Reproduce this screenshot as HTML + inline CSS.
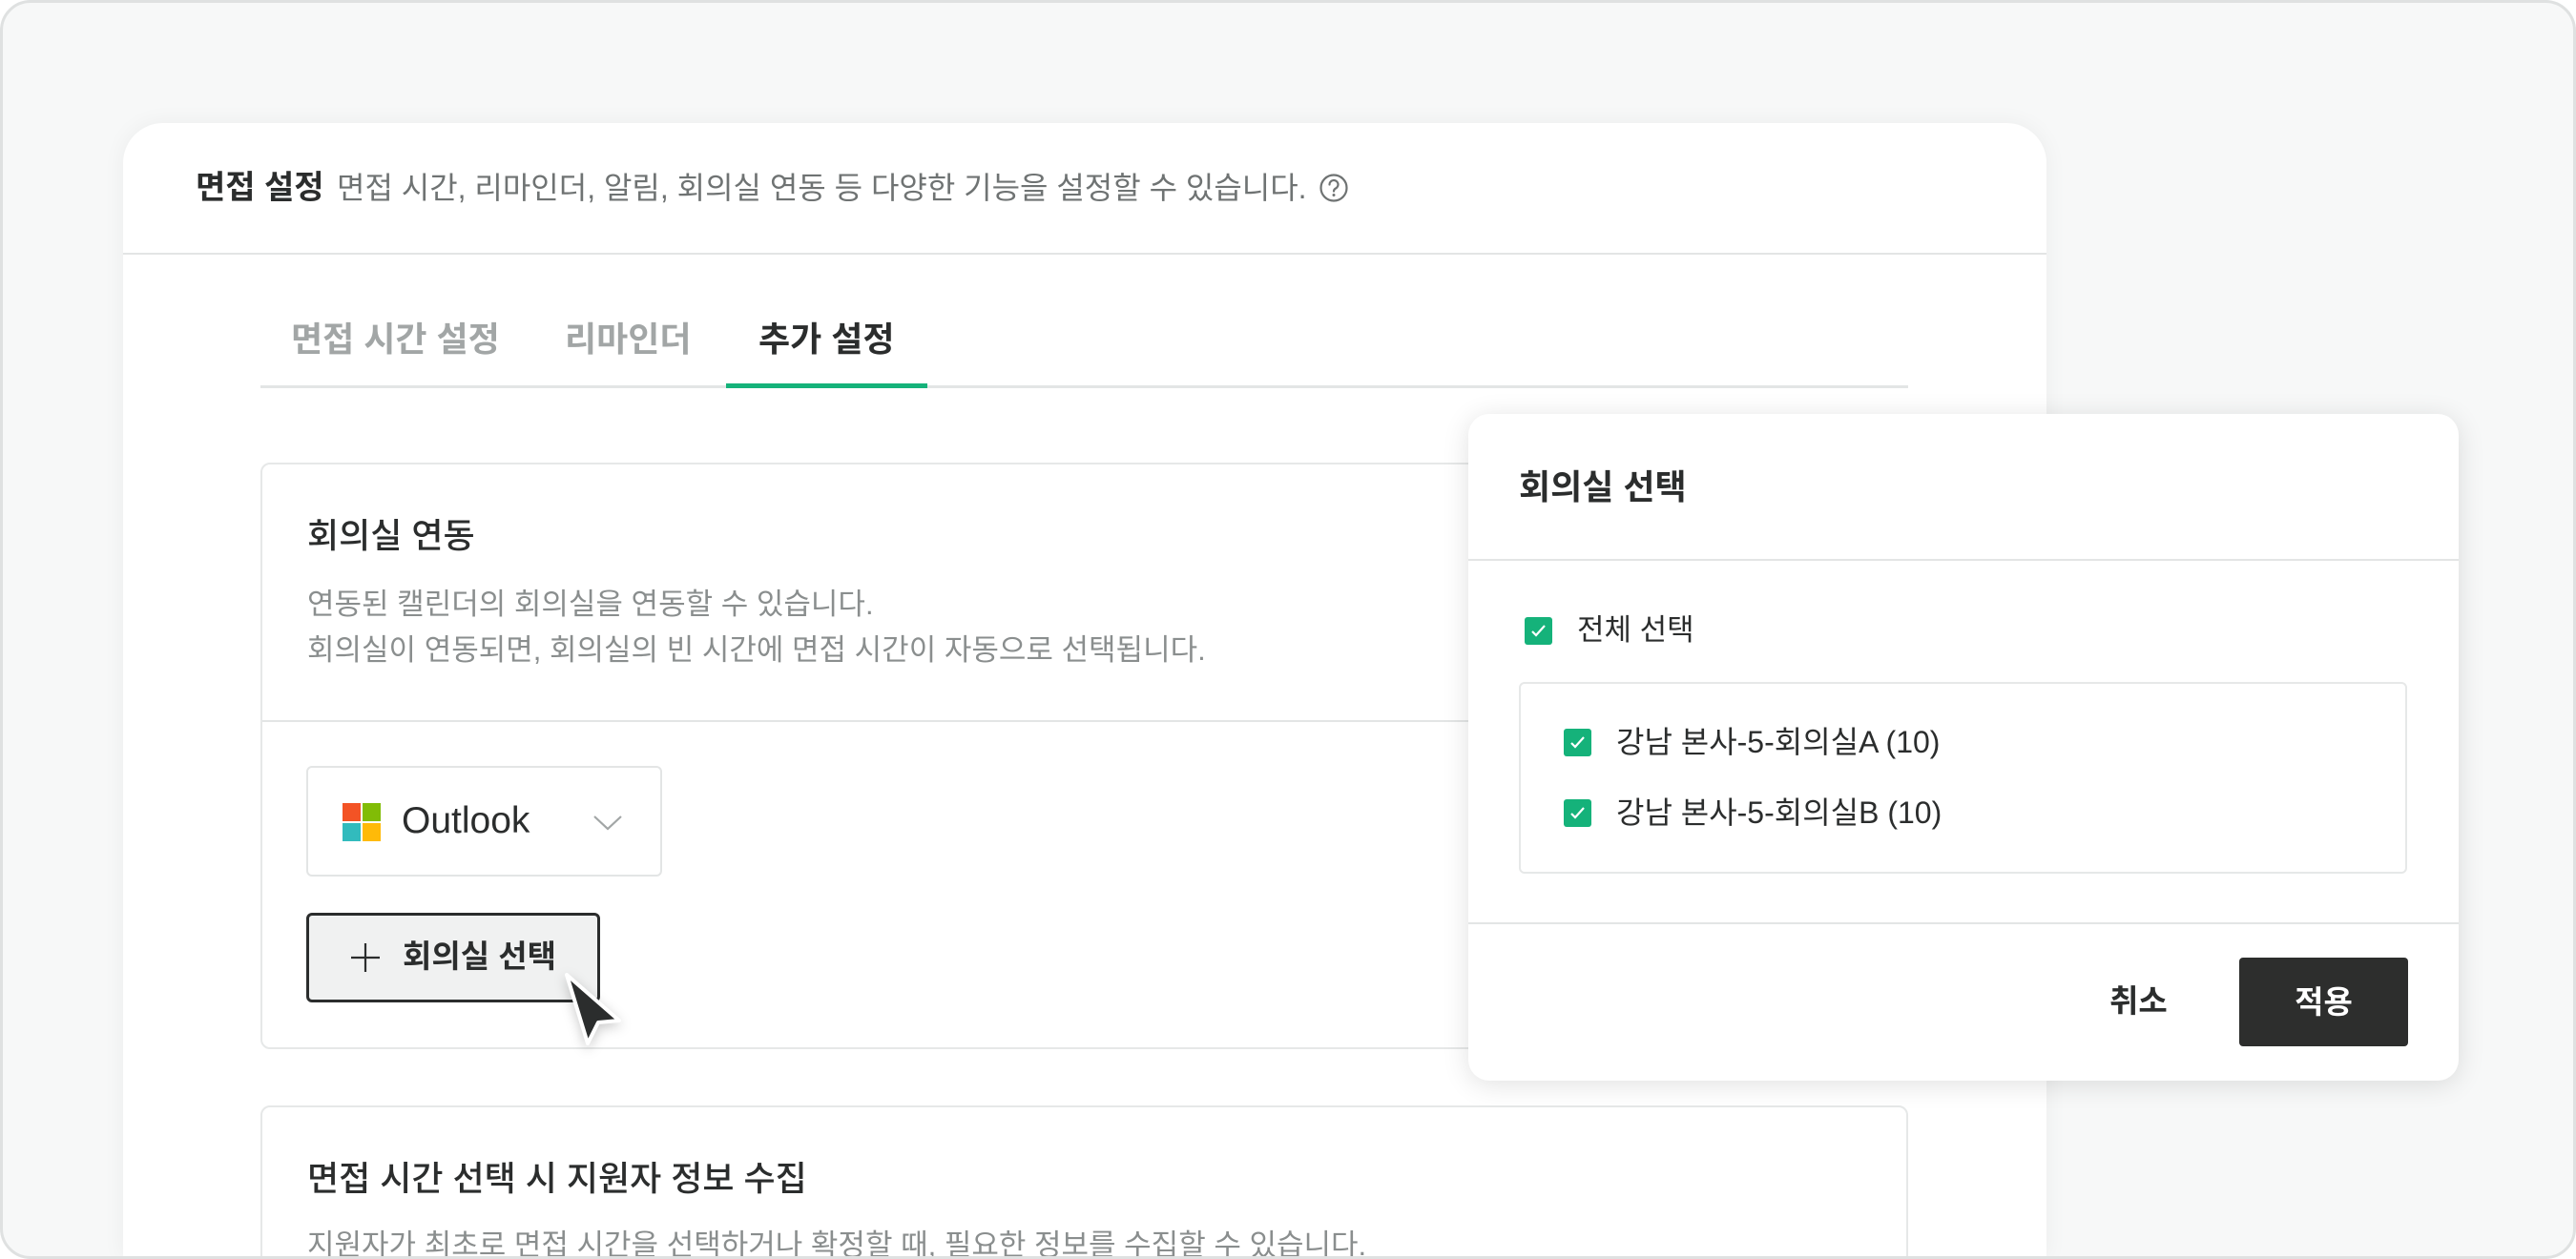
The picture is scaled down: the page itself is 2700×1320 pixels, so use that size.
<!DOCTYPE html>
<html><head><meta charset="utf-8">
<style>
*{box-sizing:border-box;margin:0;padding:0}
html,body{width:2700px;height:1320px;overflow:hidden;background:#fff}
body{font-family:"Liberation Sans","Noto Sans CJK KR",sans-serif;color:#2b2d2d;position:relative}
.frame{position:absolute;left:0;top:0;width:2700px;height:1320px;border:3px solid #dfe1e1;border-radius:32px;background:#f7f8f8;overflow:hidden}
.card{position:absolute;left:126px;top:126px;width:2016px;height:1190px;background:#fff;border-radius:42px 42px 0 0;box-shadow:0 0 24px rgba(0,0,0,0.05)}
.abs{position:absolute;white-space:nowrap}
.hline{position:absolute;height:2px;background:#e3e5e5}
.sec{position:absolute;border:2px solid #e6e8e8;border-radius:10px;background:#fff}
.cb{position:absolute;width:29px;height:29px;background:#15b27a;border-radius:3px}
.cb svg{position:absolute;left:6px;top:7px}
</style></head><body>
<div class="frame">
  <div class="card"></div>
  <div class="abs" style="left:202px;top:172px;font-size:34px;font-weight:700;line-height:44px;color:#2b2d2d">면접 설정</div>
  <div class="abs" style="left:350px;top:174px;font-size:32px;line-height:40px;color:#6f7373">면접 시간, 리마인더, 알림, 회의실 연동 등 다양한 기능을 설정할 수 있습니다.</div>
  <svg class="abs" style="left:1379px;top:178px" width="32" height="32" viewBox="0 0 32 32"><circle cx="16" cy="16" r="13.5" fill="none" stroke="#6f7373" stroke-width="2.2"/><path d="M11.5 12.5a4.5 4.5 0 1 1 6.5 4c-1.4.8-2 1.6-2 3" fill="none" stroke="#6f7373" stroke-width="2.2" stroke-linecap="round"/><circle cx="16" cy="23.5" r="1.5" fill="#6f7373"/></svg>
  <div class="hline" style="left:126px;top:262px;width:2016px"></div>

  <div class="abs" style="left:302px;top:331px;font-size:36px;font-weight:700;line-height:44px;color:#a2a6a6">면접 시간 설정</div>
  <div class="abs" style="left:589px;top:331px;font-size:36px;font-weight:700;line-height:44px;color:#a2a6a6">리마인더</div>
  <div class="abs" style="left:792px;top:331px;font-size:36px;font-weight:700;line-height:44px;color:#2b2d2d">추가 설정</div>
  <div class="hline" style="left:270px;top:401px;width:1727px;height:3px"></div>
  <div class="abs" style="left:758px;top:399px;width:211px;height:5px;background:#15b27a"></div>

  <div class="sec" style="left:270px;top:482px;width:1727px;height:615px"></div>
  <div class="abs" style="left:319px;top:537px;font-size:36px;line-height:44px;font-weight:500;color:#2b2d2d">회의실 연동</div>
  <div class="abs" style="left:319px;top:607px;font-size:31px;line-height:48px;color:#8a8e8e">연동된 캘린더의 회의실을 연동할 수 있습니다.<br>회의실이 연동되면, 회의실의 빈 시간에 면접 시간이 자동으로 선택됩니다.</div>
  <div class="hline" style="left:272px;top:752px;width:1723px"></div>

  <div class="abs" style="left:318px;top:800px;width:373px;height:116px;border:2px solid #e3e5e5;border-radius:6px;background:#fff"></div>
  <svg class="abs" style="left:356px;top:839px" width="40" height="40" viewBox="0 0 40 40"><rect x="0" y="0" width="19" height="19" fill="#f35325"/><rect x="21" y="0" width="19" height="19" fill="#81bc06"/><rect x="0" y="21" width="19" height="19" fill="#32bbbd"/><rect x="21" y="21" width="19" height="19" fill="#ffba08"/></svg>
  <div class="abs" style="left:418px;top:834px;font-size:39px;line-height:48px;color:#2b2d2d">Outlook</div>
  <svg class="abs" style="left:618px;top:851px" width="32" height="18" viewBox="0 0 32 18"><path d="M2 2l14 13 14-13" fill="none" stroke="#a2a6a6" stroke-width="2.2"/></svg>

  <div class="abs" style="left:318px;top:954px;width:308px;height:94px;border:3px solid #2b2d2d;border-radius:6px;background:#f0f1f1"></div>
  <svg class="abs" style="left:364px;top:985px" width="32" height="32" viewBox="0 0 32 32"><path d="M16 1v30M1 16h30" stroke="#2b2d2d" stroke-width="2.2"/></svg>
  <div class="abs" style="left:419px;top:979px;font-size:33px;font-weight:700;line-height:42px;color:#2b2d2d">회의실 선택</div>
  <svg class="abs" style="left:580px;top:1011px;filter:drop-shadow(0 4px 6px rgba(0,0,0,0.2))" width="80" height="90" viewBox="0 0 80 90"><path d="M11 8L66 56L44 58L33 80Z" fill="#2b2d2d" stroke="#fff" stroke-width="4" stroke-linejoin="round"/></svg>

  <div class="sec" style="left:270px;top:1156px;width:1727px;height:200px"></div>
  <div class="abs" style="left:319px;top:1211px;font-size:36px;line-height:44px;font-weight:500;color:#2b2d2d">면접 시간 선택 시 지원자 정보 수집</div>
  <div class="abs" style="left:319px;top:1279px;font-size:31px;line-height:48px;color:#8a8e8e">지원자가 최초로 면접 시간을 선택하거나 확정할 때, 필요한 정보를 수집할 수 있습니다.</div>

  <div class="abs" style="left:1536px;top:431px;width:1038px;height:699px;background:#fff;border-radius:22px;box-shadow:0 4px 28px rgba(0,0,0,0.12)"></div>
  <div class="abs" style="left:1589px;top:486px;font-size:36px;font-weight:700;line-height:44px;color:#2b2d2d">회의실 선택</div>
  <div class="hline" style="left:1536px;top:583px;width:1038px"></div>
  <div class="cb" style="left:1595px;top:644px"><svg width="17" height="15" viewBox="0 0 17 15"><path d="M2 8l4 4 9-10" fill="none" stroke="#fff" stroke-width="2.2"/></svg></div>
  <div class="abs" style="left:1650px;top:638px;font-size:31px;line-height:40px;color:#2b2d2d">전체 선택</div>
  <div class="abs" style="left:1589px;top:712px;width:931px;height:201px;border:2px solid #e6e8e8;border-radius:6px"></div>
  <div class="cb" style="left:1636px;top:761px"><svg width="17" height="15" viewBox="0 0 17 15"><path d="M2 8l4 4 9-10" fill="none" stroke="#fff" stroke-width="2.2"/></svg></div>
  <div class="abs" style="left:1691px;top:755px;font-size:32px;line-height:40px;color:#2b2d2d">강남 본사-5-회의실A (10)</div>
  <div class="cb" style="left:1636px;top:835px"><svg width="17" height="15" viewBox="0 0 17 15"><path d="M2 8l4 4 9-10" fill="none" stroke="#fff" stroke-width="2.2"/></svg></div>
  <div class="abs" style="left:1691px;top:829px;font-size:32px;line-height:40px;color:#2b2d2d">강남 본사-5-회의실B (10)</div>
  <div class="hline" style="left:1536px;top:964px;width:1038px"></div>
  <div class="abs" style="left:2208px;top:1026px;font-size:33px;font-weight:700;line-height:42px;color:#2b2d2d">취소</div>
  <div class="abs" style="left:2344px;top:1001px;width:177px;height:93px;background:#2d2e2d;border-radius:4px;color:#fff;font-size:33px;font-weight:700;line-height:93px;text-align:center">적용</div>
</div>
</body></html>
